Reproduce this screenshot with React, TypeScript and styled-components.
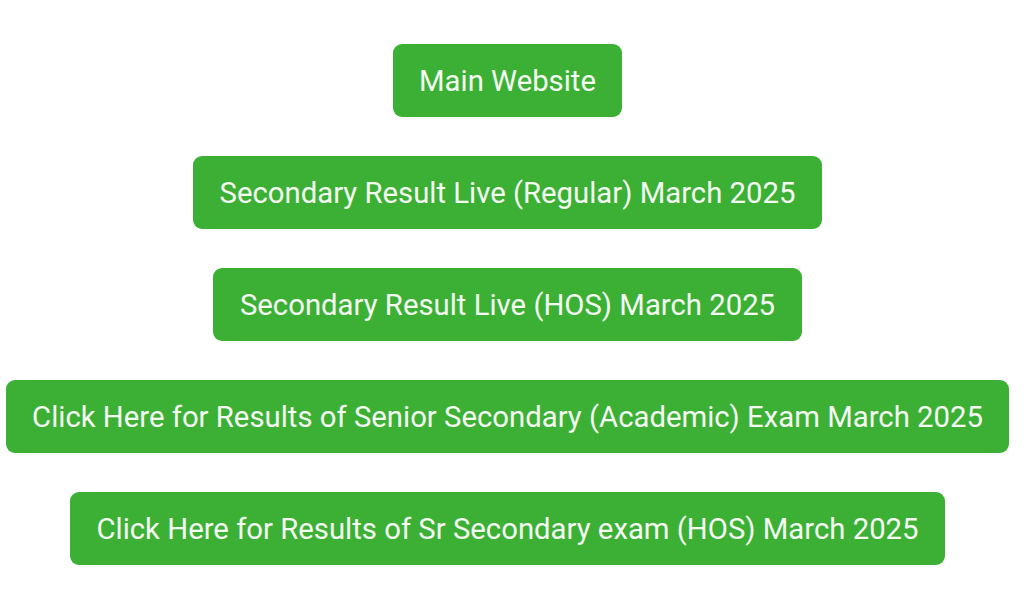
import styled, { createGlobalStyle } from "styled-components";

const GlobalStyle = createGlobalStyle`
  body {
    margin: 0;
    background: #ffffff;
    font-family: Roboto, "Liberation Sans", sans-serif;
  }
`;

const Page = styled.div`
  display: flex;
  flex-direction: column;
  align-items: center;
  gap: 39px;
  padding-top: 44px;
  width: 1015px;
  height: 596px;
  box-sizing: border-box;
`;

const LinkButton = styled.a`
  display: flex;
  align-items: center;
  justify-content: center;
  height: 73px;
  padding: 0 26.5px;
  box-sizing: border-box;
  background: #3cb034;
  color: #f4fbf2;
  border-radius: 9px;
  font-size: 29.3px;
  text-decoration: none;
  white-space: nowrap;
  cursor: pointer;
`;

const links = [
  "Main Website",
  "Secondary Result Live (Regular) March 2025",
  "Secondary Result Live (HOS) March 2025",
  "Click Here for Results of Senior Secondary (Academic) Exam March 2025",
  "Click Here for Results of Sr Secondary exam (HOS) March 2025",
];

export default function App() {
  return (
    <>
      <GlobalStyle />
      <Page>
        {links.map((label) => (
          <LinkButton key={label}>{label}</LinkButton>
        ))}
      </Page>
    </>
  );
}
